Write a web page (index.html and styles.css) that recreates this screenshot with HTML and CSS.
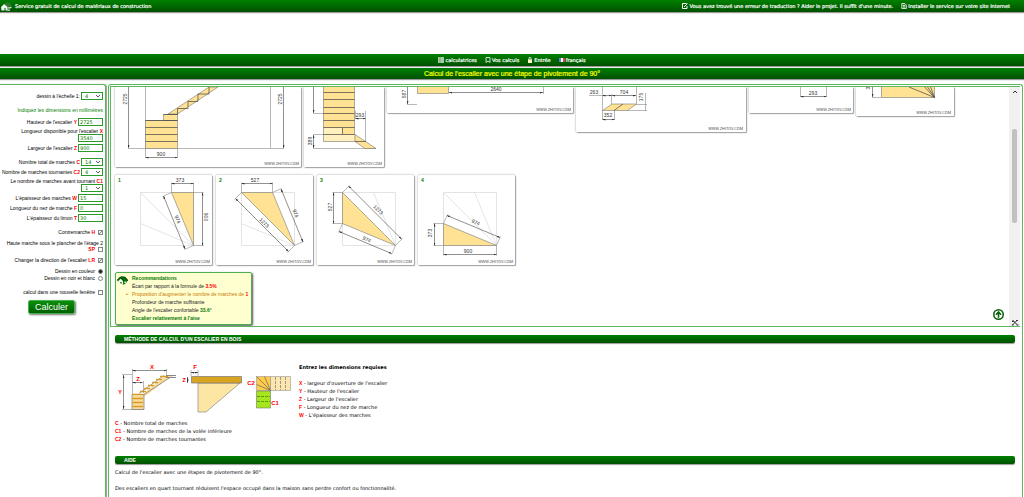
FILE: index.html
```html
<!DOCTYPE html>
<html lang="fr">
<head>
<meta charset="utf-8">
<title>Calcul de l'escalier avec une étape de pivotement de 90°</title>
<link rel="stylesheet" href="styles.css">
</head>
<body>
<svg class="defs" aria-hidden="true">
  <defs>
    <marker id="arrow" viewBox="0 0 6 4" refX="6" refY="2" markerWidth="3" markerHeight="2" markerUnits="userSpaceOnUse" orient="auto-start-reverse"><path d="M0 0L6 2L0 4z" fill="#333"/></marker>
    <symbol id="house" viewBox="0 0 12 11">
      <path d="M1 5l4-4.300 4 .6 2.500 3.500-1 3-3 2.200L2 8z" fill="#0a7a0a"/>
      <path d="M0 5.500L3.500 2 8 6M6 2.500l3 0 3 3.500" stroke="#044d04" stroke-width="1.300" fill="none"/>
      <path d="M1.500 6L4 3.700 6.500 6v3.500h-1.500V7h-1.500v2.500H1.500z" fill="#f4fff0"/>
      <path d="M8 6.500h2v2H8z" fill="#cfe8c8"/>
    </symbol>
  </defs>
</svg>

<header class="topbar">
  <a class="brand" href="#">
    <svg class="brand-icon" viewBox="0 0 12 11"><path d="M4 3l3-2 3 1 2 4-2 3-3 1" fill="#2f7a2f"/><path d="M1 6L4 3l3.500 3v3.500H5.500V7h-1v2.500H1.500z" fill="#e8f5e8"/><path d="M8 7l3.500-.500M7.500 9.500l2.500-.500" stroke="#dfeedf" stroke-width="1"/></svg>
    <span>Service gratuit de calcul de matériaux de construction</span>
  </a>
  <nav class="toplinks">
    <a href="#"><svg class="mini" viewBox="0 0 6 6"><path d="M.5.5h4M.5.5v5h4.500V3" stroke="#fff" fill="none"/><path d="M2 4l3.500-3.500" stroke="#fff"/></svg>Vous avez trouvé une erreur de traduction ? Aider le projet. Il suffit d'une minute.</a>
    <a href="#"><svg class="mini" viewBox="0 0 6 6"><path d="M.8.500h3l1.500 1.500v3.500H.8z" fill="#2a7a2a" stroke="#fff" stroke-width=".8"/><path d="M2 2.500h2M2 4h2" stroke="#fff" stroke-width=".8"/></svg>Installer le service sur votre site Internet</a>
  </nav>
</header>

<nav class="menubar">
  <a href="#"><svg class="mini" viewBox="0 0 6 6"><path d="M0 1h6M0 3h6M0 5h6" stroke="#dfeedf" stroke-width="1.300"/><path d="M2 0v6" stroke="#3a8a3a" stroke-width=".5"/></svg>calculatrices</a>
  <a href="#"><svg class="mini" viewBox="0 0 6 6"><path d="M1 .5h4v5L3 4 1 5.500z" stroke="#fff" stroke-width=".8" fill="none"/></svg>Vos calculs</a>
  <a href="#"><svg class="mini" viewBox="0 0 6 6"><path d="M1 2.500h4V6H1z" fill="#fff8c0"/><path d="M2 3V1.200a1 1 0 0 1 2 0V3" stroke="#fff" stroke-width=".8" fill="none"/></svg>Entrée</a>
  <a href="#"><svg class="mini" viewBox="0 0 6 6"><path d="M0 1h2v4H0z" fill="#5b7fd6"/><path d="M2 1h2v4H2z" fill="#fff"/><path d="M4 1h2v4H4z" fill="#e8402f"/></svg>français</a>
</nav>

<h1 class="title">Calcul de l'escalier avec une étape de pivotement de 90°</h1>

<div class="layout">
  <form class="params">
    <div class="group">
      <div class="field"><label for="scale">dessin à l'échelle 1:</label><select id="scale"><option>4</option></select></div>
    </div>
    <div class="group intro">
      <p class="hint">Indiquez les dimensions en millimètres</p>
    </div>
    <div class="group rows">
      <div class="field"><label for="y">Hauteur de l'escalier <b>Y</b></label><input id="y" type="text" value="2725"></div>
      <div class="field stacked"><label for="x">Longueur disponible pour l'escalier <b>X</b></label><input id="x" type="text" value="3540"></div>
      <div class="field"><label for="z">Largeur de l'escalier <b>Z</b></label><input id="z" type="text" value="900"></div>
    </div>
    <div class="group rows">
      <div class="field"><label for="c">Nombre total de marches <b>C</b></label><select id="c"><option>14</option></select></div>
      <div class="field"><label for="c2">Nombre de marches tournantes <b>C2</b></label><select id="c2"><option>4</option></select></div>
      <div class="field stacked"><label for="c1">Le nombre de marches avant tournant <b>C1</b></label><select id="c1"><option>1</option></select></div>
      <div class="field"><label for="w">L'épaisseur des marches <b>W</b></label><input id="w" type="text" value="15"></div>
      <div class="field"><label for="f">Longueur du nez de marche <b>F</b></label><input id="f" type="text" value="0"></div>
      <div class="field"><label for="t">L'épaisseur du limon <b>T</b></label><input id="t" type="text" value="30"></div>
    </div>
    <div class="group checks">
      <div class="field"><label for="h">Contremarche <b>H</b></label><input id="h" type="checkbox" checked></div>
      <div class="field stacked">
        <label for="sp">Haute marche sous le plancher de l'étage 2</label>
        <div class="pair"><label for="sp"><b>SP</b></label><input id="sp" type="checkbox"></div>
      </div>
      <div class="field"><label for="lr">Changer la direction de l'escalier <b>LR</b></label><input id="lr" type="checkbox" checked></div>
      <div class="radios">
        <div class="field"><label for="col">Dessin en couleur</label><input id="col" type="radio" name="mode" checked></div>
        <div class="field"><label for="bw">Dessin en noir et blanc</label><input id="bw" type="radio" name="mode"></div>
      </div>
      <div class="field"><label for="nw">calcul dans une nouvelle fenêtre</label><input id="nw" type="checkbox"></div>
    </div>
    <button class="calc" type="submit">Calculer</button>
  </form>

  <main class="content">
    <section class="viewer">
      <div class="sheets">
        <div class="drawings">
          <svg class="card" width="186" height="80" viewBox="115 87 186 80">
            <g class="thin"><path d="M145.500 87v61M270.500 87v61M128 148.500h156"/></g>
            <g class="wood"><path d="M145.500 120.500h32v28h-32zM163.500 114.500h14v6h-14zM168 114L209 87h9l-40.500 27z"/></g>
            <g class="line"><path d="M145.500 120.500h32M145.500 127.500h32M145.500 134.500h32M145.500 141.500h32M163.500 114.500h14M177.500 108.500h11M177.500 108.500v6M188 101.500h10M188 101.500v6M198 94h11M198 94v7M209 87v7"/></g>
            <g class="dim"><path d="M128.500 80v68"/><path d="M283.500 80v68"/><path d="M145.500 157.500h32"/></g>
            <path class="ext" d="M145.500 149v9M177.500 149v9"/>
            <text transform="translate(127 99) rotate(-90)">2725</text><text transform="translate(282 99) rotate(-90)">2725</text><text x="161" y="156">900</text>
            <text class="mark" x="299" y="165">WWW.ZHITOV.COM</text>
          </svg>
          <svg class="card" width="80" height="80" viewBox="304 87 80 80">
            <g class="wood"><path d="M323.500 80h31v61.500h-31zM355 134.500L376 148.500h-11L355 141.500z"/></g>
            <path d="M324 128h18.500v7H324zM324 135h30.500v6H324z" fill="#fff0c0"/>
            <g class="line"><path d="M323.500 92.500h31M323.500 99.500h31M323.500 107.500h31M323.500 113.500h31M323.500 120.500h31M323.500 127.500h31M323.500 134.500h31M342.500 128v6M355 141.500h11"/></g>
            <path class="ext" d="M313 148.500h63M365.500 111v30M313 113.500h10M313 134.500h10M355.500 111v8"/>
            <g class="dim"><path d="M313.500 80v33"/><path d="M313.500 135v13"/><path d="M355.500 118.500h10"/></g>
            <text transform="translate(312 141) rotate(-90)">389</text><text x="360" y="117">293</text>
            <text class="mark" x="382" y="165">WWW.ZHITOV.COM</text>
          </svg>
          <svg class="card" width="186" height="26" viewBox="387 87 186 26">
            <g class="wood"><path d="M417.500 80h31v13.500h-31z"/></g>
            <path class="ext" d="M407 104.500h10M543.500 87v7"/>
            <g class="dim"><path d="M407.500 80v24"/><path d="M449 92.500h94"/></g>
            <text transform="translate(406 94) rotate(-90)">587</text><text x="496" y="91">2640</text>
            <text class="mark" x="571" y="111">WWW.ZHITOV.COM</text>
          </svg>
          <svg class="card" width="170" height="45" viewBox="576 87 170 45">
            <g class="wood"><path d="M602.500 110.500L612 104h24.500l-9 6.500z"/></g>
            <path class="line" d="M614 110.500l9-6.500"/>
            <path class="ext" d="M602.500 87v33M611.500 94v10M636.500 87v17M614.500 111v9M636 104.500h11M627 110.500h20M645.500 93v18M589 95.500h13"/>
            <g class="dim"><path d="M602.500 95.500h9"/><path d="M612 95.500h24"/><path d="M602.500 119.500h12"/></g>
            <text x="594" y="94">263</text><text x="624" y="94">704</text><text x="608" y="117">352</text><text transform="translate(643 97) rotate(-90)">175</text>
            <text class="mark" x="743" y="130">WWW.ZHITOV.COM</text>
          </svg>
          <svg class="card" width="104" height="26" viewBox="749 87 104 26">
            <path class="ext" d="M800.500 87v10M826.500 87v10"/>
            <g class="dim"><path d="M800.500 96.500h26"/></g>
            <text x="813" y="95">293</text>
            <text class="mark" x="851" y="111">WWW.ZHITOV.COM</text>
          </svg>
          <svg class="card" width="98" height="29" viewBox="856 87 98 29">
            <g class="wood"><path d="M881.500 80h53v17.500h-53z"/></g>
            <path class="line" d="M934.500 97.500L909 87M934.500 97.500L918 80M934.500 97.500L923 80M934.500 97.500L928 80"/>
            <g class="dim"><path d="M872.500 80v17"/></g><path class="ext" d="M872 97.500h9"/>
            <text transform="translate(870 88) rotate(-90)">3</text>
            <text class="mark" x="951" y="114">WWW.ZHITOV.COM</text>
          </svg>
        </div>
        <div class="drawings steps">
          <svg class="card" width="97" height="90" viewBox="115 175 97 90">
            <path class="faint" d="M140.500 192.500h53v53h-53zL193.500 245.500L140.500 223.500"/>
            <g class="wood"><path d="M171.500 192.500h22v53z"/></g>
            <path class="ext" d="M171.500 192.500v-10M193.500 192.500v-10M193.500 192.500h10M193.500 245.500h10M171.500 192.500l-9 4M193.500 245.500l-9 4"/>
            <g class="dim"><path d="M171.500 183.500h22"/><path d="M202.500 192.500v53"/><path d="M163.500 196L185 249"/></g>
            <text x="180" y="182">373</text><text transform="translate(204 217) rotate(90)">900</text><text transform="translate(176 220) rotate(68)">974</text>
            <text class="num" x="118" y="182">1</text><text class="mark" x="210" y="263">WWW.ZHITOV.COM</text>
          </svg>
          <svg class="card" width="97" height="90" viewBox="216 175 97 90">
            <path class="faint" d="M241.500 192.500h53v53h-53zM241.500 223.500l53 22"/>
            <g class="wood"><path d="M241.500 192.500h31l22 53z"/></g>
            <path class="ext" d="M241.500 192.500v-10M272.500 192.500v-10M272.500 192.500l9-4M294.500 245.500l9-4M241.500 192.500l-7 7M294.500 245.500l-7 7"/>
            <g class="dim"><path d="M241.500 183.500h31"/><path d="M235.500 198.500l53 53"/><path d="M281 189l22 53"/></g>
            <text x="255" y="182">527</text><text transform="translate(263 224) rotate(45)">1273</text><text transform="translate(294 214) rotate(68)">974</text>
            <text class="num" x="219" y="182">2</text><text class="mark" x="311" y="263">WWW.ZHITOV.COM</text>
          </svg>
          <svg class="card" width="97" height="90" viewBox="317 175 97 90">
            <path class="faint" d="M342.500 192.500h53v53h-53zM373.500 192.500l22 53"/>
            <g class="wood"><path d="M342.500 192.500l53 53-53-22z"/></g>
            <path class="ext" d="M342.500 192.500h-10M342.500 223.500h-10M342.500 192.500l7-7M395.500 245.500l7-7M342.500 223.500l-4 9M395.500 245.500l-4 9"/>
            <g class="dim"><path d="M333.500 192.500v31"/><path d="M348.500 186l53 53"/><path d="M339 231.500l52.500 22"/></g>
            <text transform="translate(332 207) rotate(-90)">527</text><text transform="translate(377 211) rotate(45)">1273</text><text transform="translate(366 241) rotate(23)">974</text>
            <text class="num" x="320" y="182">3</text><text class="mark" x="412" y="263">WWW.ZHITOV.COM</text>
          </svg>
          <svg class="card" width="97" height="90" viewBox="418 175 97 90">
            <path class="faint" d="M443.500 192.500h53v53h-53zM443.500 192.500l53 53M474.500 192.500l22 53"/>
            <g class="wood"><path d="M443.500 223.500l53 22h-53z"/></g>
            <path class="ext" d="M443.500 223.500h-10M443.500 245.500h-10M443.500 245.500v10M496.500 245.500v10M443.500 223.500l4-9M496.500 245.500l4-9"/>
            <g class="dim"><path d="M434.500 223.500v22"/><path d="M443.500 254.500h53"/><path d="M447 215.500l53 22"/></g>
            <text transform="translate(432 233) rotate(-90)">373</text><text x="468" y="253">900</text><text transform="translate(475 224) rotate(23)">974</text>
            <text class="num" x="421" y="182">4</text><text class="mark" x="513" y="263">WWW.ZHITOV.COM</text>
          </svg>
        </div>
        <div class="advice">
          <svg class="advice-icon" viewBox="0 0 12 11"><use href="#house"/></svg>
          <ul>
            <li class="good"><b>Recommandations</b></li>
            <li>Écart par rapport à la formule de <b class="bad">3.5%</b></li>
            <li class="warn">Proposition d'augmenter le nombre de marches de <b class="bad">1</b></li>
            <li>Profondeur de marche suffisante</li>
            <li>Angle de l'escalier confortable <b class="good">33.6°</b></li>
            <li class="good"><b>Escalier relativement à l'aise</b></li>
          </ul>
        </div>
      </div>
      <div class="scroll">
        <svg class="chev" viewBox="0 0 6 4"><path d="M1 3l2-2 2 2" stroke="#333" fill="none"/></svg>
        <div class="thumb"></div>
        <svg class="tools" viewBox="0 0 8 7"><path d="M1.500 1l5 5M6.500 1l-5 5M1 2.500h2M5 1.500h2M.8 6h1.700M5.500 6h2" stroke="#333" stroke-width="1" fill="none"/></svg>
      </div>
      <a class="to-top" href="#" aria-label="Haut"><svg viewBox="0 0 10 10"><circle cx="5" cy="5" r="4.300" fill="#fff" stroke="#086008" stroke-width="1.400"/><path d="M5 8V3M2.700 5.200L5 2.700l2.300 2.500" stroke="#086008" stroke-width="1.400" fill="none"/></svg></a>
    </section>

    <section class="info">
      <h2>MÉTHODE DE CALCUL D'UN ESCALIER EN BOIS</h2>
      <div class="method">
        <div>
          <svg class="scheme" width="178" height="52" viewBox="115 363 178 52">
            <path d="M132 395.500v14h12v-14l2 0 21-16 7-4h-8l-20 16-4 4z" fill="#f7dc9c"/>
            <path d="M132 409.500v-15h12v15zM144 394.500l26-17M139 393.500l25-18" stroke="#777" stroke-width=".7" fill="none"/>
            <path d="M132.500 394.500h10.500M132.500 398.500h10.500M132.500 402.500h10.500M132.500 406.500h10.500M140 391.500h6M144 388.500h6M148 385.500h6M152 382.500h6M156 379.500h6M160 376.500h8" stroke="#d99a26" stroke-width="1.700"/>
            <path d="M166 375.500h10M166 377.500h10" stroke="#888" stroke-width="1"/>
            <path d="M132.500 369v25M166.500 369v7M122 374.500h10M122 409.500h22M143.500 381v12M191 370v6M198 370v6" stroke="#888" stroke-width=".6"/>
            <g class="dim"><path d="M132.500 370.500h34"/><path d="M123.500 375v34"/><path d="M132.500 382.500h10"/><path d="M191 372.500h7"/><path d="M187.500 377v6"/></g>
            <path d="M198 383h42l-34 29h-8z" fill="#fde5a3" stroke="#888" stroke-width=".7"/>
            <path d="M191.500 376.500h50v6.500h-50z" fill="#d9a520" stroke="#777" stroke-width=".7"/>
            <path d="M270.500 376.500h20v14h-20z" fill="#fde5b0" stroke="#999" stroke-width=".6"/>
            <path d="M275.500 377v13M280.500 377v13M285.500 377v13" stroke="#777" stroke-width=".7" stroke-dasharray="3 1"/>
            <path d="M256.500 376.500h14v14h-14z" fill="#ffcb4a" stroke="#999" stroke-width=".6"/>
            <path d="M270.500 390.500l-14-6M270.500 390.500l-14-14M270.500 390.500l-6-14" stroke="#666" stroke-width=".7"/>
            <path d="M256.500 391h14v17h-14z" fill="#a5e61c" stroke="#777" stroke-width=".6"/>
            <path d="M257 396.500h13M257 401.500h13" stroke="#3a7a10" stroke-width=".7" stroke-dasharray="3 1"/>
            <text x="152" y="369">X</text><text x="138" y="381">Z</text><text x="120" y="394">Y</text><text x="195" y="369">F</text><text x="184" y="382">Z</text><text x="251" y="385">C2</text><text x="275" y="405">C1</text>
          </svg>
          <p><b>C</b> - Nombre total de marches</p>
          <p><b>C1</b> - Nombre de marches de la volée inférieure</p>
          <p><b>C2</b> - Nombre de marches tournantes</p>
        </div>
        <div class="legend">
          <h3>Entrez les dimensions requises</h3>
          <p><b>X</b> - largeur d'ouverture de l'escalier</p>
          <p><b>Y</b> - Hauteur de l'escalier</p>
          <p><b>Z</b> - Largeur de l'escalier</p>
          <p><b>F</b> - Longueur du nez de marche</p>
          <p><b>W</b> - L'épaisseur des marches</p>
        </div>
      </div>
      <h2>AIDE</h2>
      <div class="help">
        <p>Calcul de l'escalier avec une étapes de pivotement de 90°.</p>
        <p>Des escaliers en quart tournant réduisent l'espace occupé dans la maison sans perdre confort ou fonctionnalité.</p>
      </div>
    </section>
  </main>
</div>
</body>
</html>
```
FILE: styles.css
```css
* { box-sizing: border-box; }
html { height: 100%; }
body {
  margin: 0;
  height: 100%;
  display: flex;
  flex-direction: column;
  overflow: hidden;
  background: #fff;
  color: #000;
  font: 5px/8px "Liberation Sans", Arial, sans-serif;
}
h1, h2, h3, p, ul { margin: 0; padding: 0; }
a { color: inherit; text-decoration: none; }
b { font-weight: 700; }
svg { display: block; flex: none; }
.defs { position: absolute; width: 0; height: 0; }

/* bars */
.topbar, .menubar, .title {
  flex: none;
  display: flex;
  align-items: center;
  background: linear-gradient(#008000, #005000);
  box-shadow: 0 1px 1px #999;
  color: #fff;
}
.topbar {
  height: 12px;
  justify-content: space-between;
  padding: 0 14px 0 0;
  font-family: "DejaVu Sans", Verdana, sans-serif;
  -webkit-text-stroke: 0.2px #fff;
}
.brand { display: flex; align-items: center; height: 10px; gap: 3px; }
.brand-icon { width: 12px; height: 11px; }
.toplinks { display: flex; gap: 8px; }
.toplinks a, .menubar a { display: flex; align-items: center; gap: 1px; }
.mini { width: 6px; height: 6px; }
.menubar {
  height: 12px;
  margin-top: 42px;
  justify-content: center;
  gap: 8px;
  font-family: "DejaVu Sans", Verdana, sans-serif;
  -webkit-text-stroke: 0.2px #fff;
}
.title {
  height: 11px;
  margin-top: 2px;
  justify-content: center;
  color: #ff0;
  font-size: 7px;
  line-height: 11px;
  font-weight: 400;
  -webkit-text-stroke: 0.2px #ff0;
}

/* two columns */
.layout { flex: 1; min-height: 0; display: flex; gap: 2px; margin: 5px 1px 0 0; }
.params {
  flex: none;
  width: 106px;
  padding: 7px 2px 0 0;
  border: solid #5cb85c;
  border-width: 1px 1px 0 0;
  border-radius: 0 3px 0 0;
  box-shadow: 1px 0 1px #999;
}
.group { display: flex; flex-direction: column; margin-bottom: 6px; }
.intro { margin-bottom: 4px; }
.rows { gap: 2px; }
.checks { gap: 4px; margin-bottom: 4px; }
.field { display: flex; justify-content: flex-end; align-items: center; gap: 1px; text-align: right; }
.field label { line-height: 7px; white-space: nowrap; }
.field b { color: red; }
.stacked { flex-direction: column; align-items: flex-end; gap: 0; }
.stacked label { line-height: 6px; }
.pair { display: flex; align-items: center; gap: 1px; }
.hint { color: green; text-align: right; line-height: 8px; }
.params input[type="text"], .params select {
  appearance: none;
  height: 8px;
  margin: 0;
  padding: 0 1px;
  border: 1px solid #2a9a2a;
  border-radius: 0;
  background: #fff;
  color: green;
  font: 5px/6px "DejaVu Sans", Verdana, sans-serif;
}
.params input[type="text"] { width: 25px; }
.params select {
  width: 22px;
  padding-left: 3px;
  background: #fff url("data:image/svg+xml,%3Csvg xmlns='http://www.w3.org/2000/svg' viewBox='0 0 6 4'%3E%3Cpath d='M1 1l2 2 2-2' stroke='%23333' fill='none' stroke-width='.8'/%3E%3C/svg%3E") no-repeat right 1px center / 6px 4px;
}
.field input[type="checkbox"], .field input[type="radio"] {
  appearance: none;
  width: 5px;
  height: 5px;
  margin: 0 0 0 2px;
  border: 1px solid #888;
  background: #fff;
}
.field input[type="radio"] { border-radius: 50%; }
.field input[type="checkbox"]:checked { background: linear-gradient(135deg, #fff 30%, #888 50%, #fff 70%); }
.field input[type="radio"]:checked { background: #222; }
.checks .field { min-height: 8px; }
.checks .radios .field { min-height: 7px; }
.radios { margin-bottom: 2px; }
.calc {
  display: block;
  margin: 0 auto;
  padding: 0 6px;
  height: 14px;
  border: 1px solid #4caf50;
  border-radius: 2px;
  background: linear-gradient(#0a8f0a, #006000);
  box-shadow: 1px 1px 2px #777;
  color: #fff;
  font: 9px/12px "Liberation Sans", Arial, sans-serif;
}

/* content panel */
.content {
  flex: 1;
  min-width: 0;
  display: flex;
  flex-direction: column;
  padding: 1px 2px 0 1px;
  border: solid #5cb85c;
  border-width: 1px 1px 0 1px;
  border-radius: 3px 3px 0 0;
}
.viewer {
  position: relative;
  flex: none;
  display: flex;
  height: 241px;
  overflow: hidden;
  border: 1px solid #5cb85c;
  border-right: 0;
}
.sheets { flex: 1; min-width: 0; padding-left: 4px; }
.drawings { display: flex; align-items: flex-start; gap: 3px; }
.steps { gap: 4px; margin-top: 8px; }
.card {
  background: #fff;
  border-radius: 1px;
  box-shadow: 0 0 2px #888, 1px 1px 1px #aaa;
}
.card text { font-size: 5px; fill: #333; text-anchor: middle; }
.card .num { fill: #008000; text-anchor: start; font-weight: 700; }
.card .mark { font: 4px Roboto, sans-serif; fill: #555; text-anchor: end; }
.wood { fill: #ffe294; stroke: #777; stroke-width: .6; }
.line { stroke: #444; stroke-width: .7; fill: none; }
.thin { stroke: #999; stroke-width: .7; fill: none; }
.ext { stroke: #888; stroke-width: .6; fill: none; }
.faint { stroke: #ddd; stroke-width: .8; fill: none; }
.dim path { stroke: #444; stroke-width: .6; fill: none; marker-start: url(#arrow); marker-end: url(#arrow); }

.advice {
  display: flex;
  gap: 4px;
  width: 137px;
  margin-top: 7px;
  padding: 1px 2px 2px 1px;
  border: 1px solid #4caf50;
  border-radius: 2px;
  background: #ffffd0;
  box-shadow: 1px 1px 2px #555;
}
.advice-icon { width: 11px; height: 11px; margin-top: 1px; }
.advice ul { list-style: none; white-space: nowrap; color: #222; }
.advice .good { color: #087808; }
.advice .bad { color: red; }
.advice .warn { color: #c87800; }
.advice .warn::before { content: "•"; float: left; margin-left: -6px; }

.scroll {
  flex: none;
  width: 11px;
  display: flex;
  flex-direction: column;
  align-items: center;
  padding-top: 3px;
  background: #f1f1f1;
}
.chev { width: 6px; height: 4px; margin-bottom: 35px; }
.thumb { width: 5px; height: 94px; border-radius: 2px; background: #c1c1c1; }
.tools { width: 8px; height: 7px; margin-top: auto; }
.to-top { position: absolute; right: 16px; bottom: 6px; width: 11px; height: 11px; }

/* text sections */
.info { padding: 8px 5px 0; font-family: "DejaVu Sans", Verdana, sans-serif; }
.info h2 {
  height: 8px;
  padding-left: 9px;
  border-radius: 2px;
  background: linear-gradient(#008000, #005000);
  box-shadow: 0 1px 1px #999;
  color: #fff;
  font: 700 5px/8px "Liberation Sans", Arial, sans-serif;
}
.method { display: flex; gap: 6px; padding: 20px 0 13px; }
.info b, .scheme text { color: red; fill: red; font-family: "Liberation Sans", Arial, sans-serif; }
.scheme { margin-bottom: 4px; }
.scheme text { font-size: 6px; font-weight: 700; text-anchor: middle; }
.legend h3 { margin-bottom: 8px; font: 700 5px/8px "DejaVu Sans", Verdana, sans-serif; }
.help { display: grid; gap: 8px; padding-top: 4px; }
```
